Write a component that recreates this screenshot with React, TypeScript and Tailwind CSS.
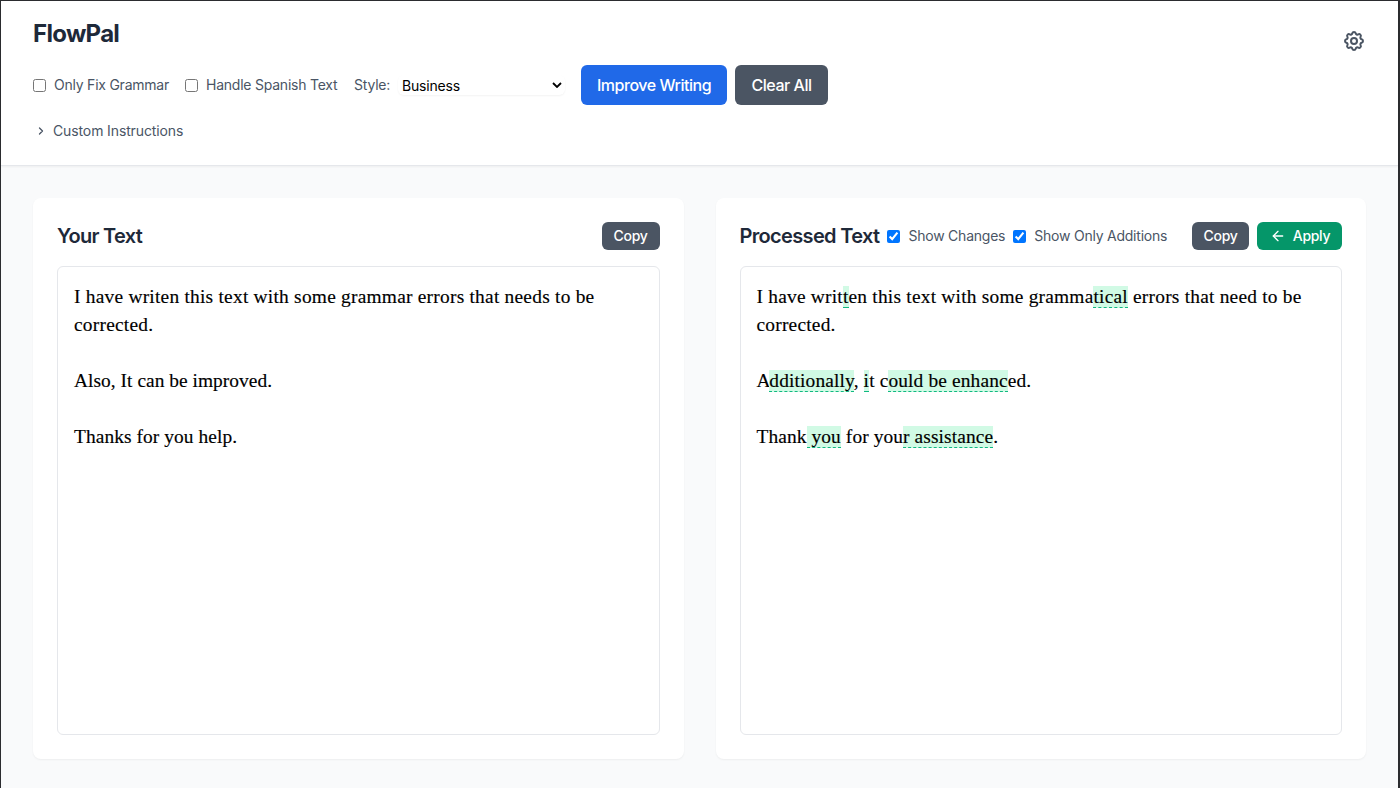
import { ReactNode, useState } from "react";
import { ArrowLeft, ChevronRight } from "lucide-react";

function Check({ label, initial = false }: { label: string; initial?: boolean }) {
  const [checked, setChecked] = useState(initial);
  return (
    <label className="flex items-center gap-2">
      <input
        type="checkbox"
        checked={checked}
        onChange={() => setChecked(!checked)}
        className="m-0 h-[13px] w-[13px] shrink-0"
      />
      <span className="whitespace-nowrap text-sm tracking-[-0.23px] text-gray-600">{label}</span>
    </label>
  );
}

function Gear() {
  return (
    <svg className="h-6 w-6" viewBox="0 0 24 24" fill="none" stroke="currentColor" strokeWidth="2" strokeLinecap="round" strokeLinejoin="round">
      <path d="M10.325 4.317c.426-1.756 2.924-1.756 3.35 0a1.724 1.724 0 002.573 1.066c1.543-.94 3.31.826 2.37 2.37a1.724 1.724 0 001.065 2.572c1.756.426 1.756 2.924 0 3.35a1.724 1.724 0 00-1.066 2.573c.94 1.543-.826 3.31-2.37 2.37a1.724 1.724 0 00-2.572 1.065c-.426 1.756-2.924 1.756-3.35 0a1.724 1.724 0 00-2.573-1.066c-1.543.94-3.31-.826-2.37-2.37a1.724 1.724 0 00-1.065-2.572c-1.756-.426-1.756-2.924 0-3.35a1.724 1.724 0 001.066-2.573c-.94-1.543.826-3.31 2.37-2.37.996.608 2.296.07 2.572-1.065z" />
      <path d="M15 12a3 3 0 11-6 0 3 3 0 016 0z" />
    </svg>
  );
}

function Add({ children }: { children: ReactNode }) {
  return <span className="border-b border-dashed border-[#10b981] bg-[#d1fae5]">{children}</span>;
}

const editor =
  "flex-1 whitespace-pre-wrap rounded-md border border-gray-200 p-4 font-['Georgia','Liberation_Serif',serif] text-[19.4px] leading-7 text-black [-webkit-text-stroke:0.15px_black]";

export default function App() {
  return (
    <div className="flex h-[788px] flex-col border-l border-r-2 border-t border-[#2b2c2f] bg-[#f9fafb] font-['Inter',sans-serif]">
      <header className="flex h-[165px] shrink-0 items-start justify-between border-b border-gray-200 bg-white px-8 pt-4 shadow-xs">
        <div>
          <h1 className="pt-px text-2xl font-bold leading-8 tracking-[-0.7px] text-gray-800">FlowPal</h1>
          <div className="mt-[15px] flex h-10 items-center">
            <div className="flex items-center">
              <div className="w-[152px]"><Check label="Only Fix Grammar" /></div>
              <div className="w-[169px]"><Check label="Handle Spanish Text" /></div>
              <label className="flex items-center">
                <span className="w-[44px] text-sm tracking-[-0.2px] text-gray-600">Style:</span>
                <span className="flex h-5 w-[167px] items-center justify-between rounded-md bg-white pl-1 pr-[3px] text-sm tracking-[-0.2px] text-black shadow-xs">
                  <span className="pt-0.5">Business</span>
                  <svg className="h-[6px] w-[10px]" viewBox="0 0 10 6" fill="none" stroke="currentColor" strokeWidth="1.8">
                    <path d="M1 1l4 4 4-4" />
                  </svg>
                </span>
              </label>
            </div>
            <div className="ml-4 flex gap-2">
              <button className="h-10 w-[146px] rounded-md bg-[#2069e8] text-base font-medium tracking-[-0.47px] text-white">Improve Writing</button>
              <button className="h-10 w-[93px] rounded-md bg-[#4b5563] text-base font-medium tracking-[-0.47px] text-white">Clear All</button>
            </div>
          </div>
          <button className="mt-4 flex items-center gap-1 text-sm tracking-[-0.12px] text-gray-600">
            <ChevronRight size={12} strokeWidth={2.6} className="mx-0.5" />
            Custom Instructions
          </button>
        </div>
        <button className="mt-3 text-[#4b5563]">
          <Gear />
        </button>
      </header>

      <main className="grid min-h-0 flex-1 grid-cols-2 gap-8 px-8 pb-[29px] pt-8">
        <section className="flex flex-col rounded-lg bg-white p-6 shadow-xs">
          <div className="mb-4 flex h-7 items-center justify-between">
            <h2 className="text-xl font-semibold tracking-[-0.72px] text-gray-800">Your Text</h2>
            <button className="h-7 w-[58px] rounded-md bg-[#4b5563] text-sm font-medium tracking-[-0.25px] text-white">Copy</button>
          </div>
          <div className={editor}>
            <p className="tracking-[0.236px]">I have writen this text with some grammar errors that needs to be corrected.</p>
            <p className="mt-7 tracking-[0.04px]">Also, It can be improved.</p>
            <p className="mt-7 tracking-[0.08px]">Thanks for you help.</p>
          </div>
        </section>

        <section className="flex flex-col rounded-lg bg-white p-6 shadow-xs">
          <div className="mb-4 flex h-7 items-center justify-between">
            <div className="flex items-center gap-2">
              <h2 className="whitespace-nowrap text-xl font-semibold tracking-[-0.66px] text-gray-800">Processed Text</h2>
              <Check label="Show Changes" initial />
              <Check label="Show Only Additions" initial />
            </div>
            <div className="flex gap-2">
              <button className="h-7 w-[57px] rounded-md bg-[#4b5563] text-sm font-medium tracking-[-0.25px] text-white">Copy</button>
              <button className="flex h-7 w-[85px] items-center justify-center gap-[7px] rounded-md bg-[#059669] text-sm font-medium tracking-[-0.3px] text-white">
                <ArrowLeft size={16} strokeWidth={2} className="ml-px" />
                Apply
              </button>
            </div>
          </div>
          <div className={editor}>
            <p className="tracking-[0.22px]">
              I have writ<Add>t</Add>en this text with some gramma<Add>tical</Add> errors that need to be corrected.
            </p>
            <p className="mt-7 tracking-[0.14px]">
              <span className="tracking-[-1.2px]">A</span><Add>dditionally</Add>, <Add>i</Add>t c<Add>ould be enhanc</Add>ed.
            </p>
            <p className="mt-7 tracking-[0.1px]">
              Thank<Add> you</Add> for you<Add>r assistance</Add>.
            </p>
          </div>
        </section>
      </main>
    </div>
  );
}
